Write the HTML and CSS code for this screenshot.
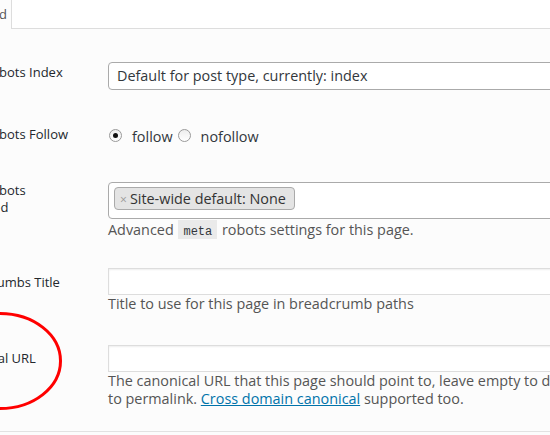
FILE: index.html
```html
<!DOCTYPE html>
<html>
<head>
<meta charset="utf-8">
<link rel="stylesheet" href="styles.css">
</head>
<body>
<div class="page">
  <div class="tabs">
    <div class="tab-label">Advanced</div>
    <div class="tab-panel"></div>
  </div>
  <div class="form">
    <div class="row row-index">
      <div class="label label-index">Meta Robots Index</div>
      <div class="field">
        <div class="select">Default for post type, currently: index</div>
      </div>
    </div>
    <div class="row row-follow">
      <div class="label label-follow">Meta Robots Follow</div>
      <div class="field radios">
        <span class="radio checked"></span><span class="radio-text">follow</span><span class="radio"></span><span class="radio-text">nofollow</span>
      </div>
    </div>
    <div class="row row-adv">
      <div class="label label-adv">Meta Robots Advanced</div>
      <div class="field">
        <div class="multi"><span class="chip"><span class="chip-x">×</span>Site-wide default: None</span></div>
      </div>
      <p class="desc">Advanced <code>meta</code> robots settings for this page.</p>
    </div>
    <div class="row row-bc">
      <div class="label label-bc">Breadcrumbs Title</div>
      <div class="field"><div class="input"></div></div>
      <p class="desc">Title to use for this page in breadcrumb paths</p>
    </div>
    <div class="row row-canon">
      <div class="label label-canon">Canonical URL</div>
      <div class="field"><div class="input"></div></div>
      <p class="desc">The canonical URL that this page should point to, leave empty to default to permalink. <a href="#">Cross domain canonical</a> supported too.</p>
    </div>
  </div>
</div>
<svg class="annotation" width="550" height="435" viewBox="0 0 550 435">
  <ellipse cx="0" cy="361" rx="60.5" ry="47.5" fill="none" stroke="#ff0000" stroke-width="3"/>
</svg>
</body>
</html>
```

FILE: styles.css
```css
html, body {
  margin: 0;
  padding: 0;
}
body {
  width: 550px;
  height: 435px;
  overflow: hidden;
  background: #fcfcfc;
  font-family: "Open Sans", "DejaVu Sans", sans-serif;
  color: #32373c;
  position: relative;
}
.page {
  margin-left: -51px;
  width: 654px;
}
.tabs {
  display: flex;
  height: 29px;
}
.tab-label {
  width: 62px;
  box-sizing: border-box;
  padding-right: 4px;
  padding-top: 5px;
  text-align: right;
  font-size: 13px;
  line-height: 18px;
  color: #555;
  white-space: nowrap;
  overflow: hidden;
  direction: rtl;
}
.tab-panel {
  flex: 1;
  background: #fff;
  border-left: 1px solid #ddd;
  border-bottom: 1px solid #ddd;
}
.form {
  border-bottom: 1px solid #e2e2e2;
  padding-bottom: 23px;
}
.row {
  display: grid;
  grid-template-columns: 159px 1fr;
}
.label {
  grid-column: 1;
  grid-row: 1;
  width: 130px;
  font-size: 13px;
  line-height: 18px;
  color: #23282d;
  align-self: start;
}
.field {
  grid-column: 2;
  grid-row: 1;
}
.desc {
  grid-column: 2;
  grid-row: 2;
  margin: 0;
  font-size: 14.4px;
  line-height: 18px;
  color: #555;
}
.desc a {
  color: #0073aa;
  text-decoration: underline;
}
.desc code {
  display: inline-block;
  font-family: "Liberation Mono", "DejaVu Sans Mono", monospace;
  font-size: 12px;
  line-height: 13px;
  padding: 6px 5px 0;
  margin: 0 1px;
  background: rgba(0, 0, 0, 0.07);
  color: #32373c;
}

.row-index { margin-top: 33px; }
.label-index { margin-top: 1px; }
.select {
  box-sizing: border-box;
  height: 28px;
  border: 1px solid #aaa;
  border-radius: 4px;
  background: #fff;
  padding-left: 8px;
  font-size: 14.4px;
  line-height: 26px;
  color: #32373c;
  white-space: nowrap;
}

.row-follow { margin-top: 38px; }
.label-follow { margin-top: -3px; }
.radios {
  display: flex;
  align-items: baseline;
  font-size: 14.4px;
  line-height: 18px;
  color: #32373c;
}
.radio {
  box-sizing: border-box;
  width: 13px;
  height: 13px;
  border-radius: 50%;
  border: 1px solid #9a9a9a;
  background: linear-gradient(#eeeeee, #fff);
  margin-left: 1px;
  margin-right: 10px;
  position: relative;
}
.radio.checked::after {
  content: "";
  position: absolute;
  left: 3px;
  top: 3px;
  width: 5px;
  height: 5px;
  border-radius: 50%;
  background: #111;
}
.radio-text { margin-right: 4px; }

.row-adv { margin-top: 36px; }
.label-adv { line-height: 17px; margin-top: 0; }
.multi {
  box-sizing: border-box;
  height: 37px;
  border: 1px solid #aaa;
  border-radius: 4px;
  background: #fff;
  padding: 4px 5px;
}
.chip {
  display: inline-block;
  box-sizing: border-box;
  height: 23px;
  border: 1px solid #aaa;
  border-radius: 4px;
  background: #e4e4e4;
  padding: 0 8px 0 5px;
  font-size: 14.4px;
  line-height: 21px;
  color: #333;
  white-space: nowrap;
}
.chip-x {
  color: #999;
  font-size: 12px;
  margin-right: 3px;
}
.row-adv .desc { margin-top: 1px; }

.row-bc { margin-top: 29px; }
.label-bc { margin-top: 5px; }
.input {
  box-sizing: border-box;
  height: 27px;
  border: 1px solid #ddd;
  background: #fff;
  box-shadow: inset 0 1px 2px rgba(0, 0, 0, 0.07);
}

.row-canon { margin-top: 32px; }
.label-canon { margin-top: 4px; }

.annotation {
  position: absolute;
  left: 0;
  top: 0;
  pointer-events: none;
}
```
